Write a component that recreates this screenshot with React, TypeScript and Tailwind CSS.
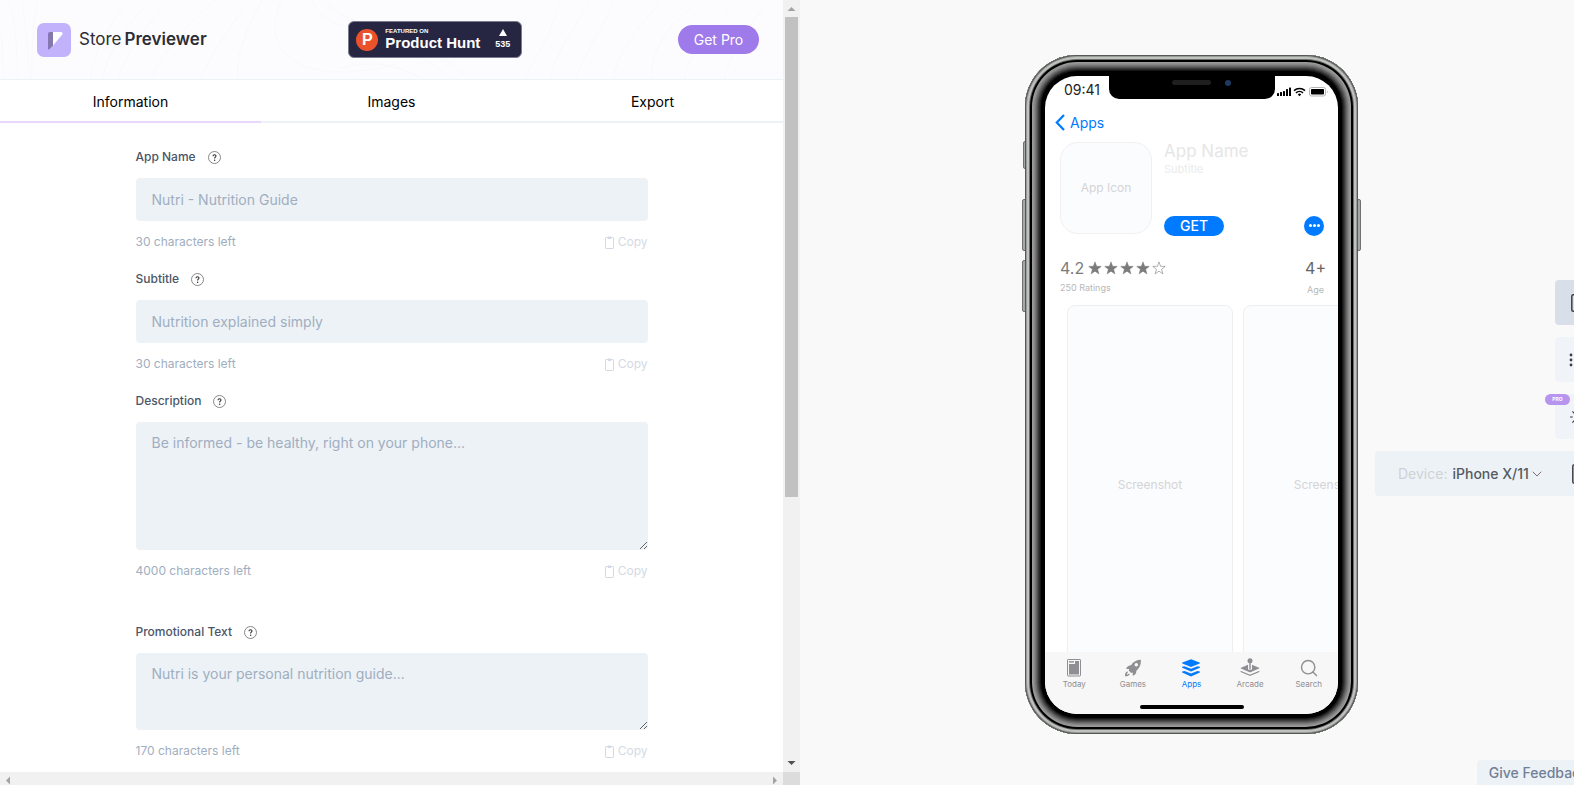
import { useState } from 'react'
import type { ReactNode } from 'react'
import { ChevronDown, Search } from 'lucide-react'

const tabs = ['Information', 'Images', 'Export']

/* Icons */

const LogoMark = () => (
  <svg width="34" height="34" viewBox="0 0 34 34" aria-hidden="true">
    <rect width="34" height="34" rx="7" fill="#c1b2fb" />
    <path d="M11 11a2 2 0 0 1 2-2h3v13.500l-4 4a.6.6 0 0 1-1-.4z" fill="#8577b0" />
    <path d="M16 9h8a1.600 1.600 0 0 1 1.300 2.600L16 22.500z" fill="#fff" />
  </svg>
)

const HelpIcon = () => (
  <svg width="13" height="13" viewBox="0 0 13 13" fill="none" aria-hidden="true">
    <circle cx="6.5" cy="6.5" r="6" stroke="#6b6b6b" strokeWidth="0.8" />
    <path d="M5 5.200c0-1 .6-1.500 1.500-1.500S8 4.300 8 5.100c0 1.100-1.400 1.100-1.400 2.300" stroke="#333" strokeWidth="1.1" />
    <circle cx="6.6" cy="9.200" r="0.75" fill="#333" />
  </svg>
)

const CopyIcon = () => (
  <svg width="9" height="13" viewBox="0 0 9 13" fill="none" stroke="currentColor" aria-hidden="true">
    <rect x="0.5" y="1.5" width="8" height="11" rx="0.6" />
    <path d="M3 1v1.500h3V1z" />
  </svg>
)

const Star = ({ filled }: { filled: boolean }) => (
  <svg width="14" height="14" viewBox="0 0 24 24" aria-hidden="true">
    <path
      d="M12 1.500l2.700 7.600 8 .2-6.300 4.900 2.200 7.800L12 17.400 5.400 22l2.200-7.800L1.300 9.300l8-.2z"
      fill={filled ? '#7b7b7b' : 'none'}
      stroke="#7b7b7b"
      strokeWidth="1"
    />
  </svg>
)

const StatusIcons = () => (
  <svg width="52" height="12" viewBox="0 0 52 12" aria-hidden="true">
    <rect x="0" y="7" width="2" height="3" rx="0.5" />
    <rect x="3" y="6" width="2" height="4" rx="0.5" />
    <rect x="6" y="5" width="2" height="5" rx="0.5" />
    <rect x="9" y="3" width="2" height="7" rx="0.5" />
    <rect x="12" y="1.5" width="2" height="8.5" rx="0.5" />
    <g fill="none" stroke="#000" strokeWidth="1.5">
      <path d="M17 4.600a8 8 0 0 1 11 0" />
      <path d="M19 6.900a5 5 0 0 1 7 0" />
    </g>
    <path d="M20.800 8.400a2.500 2.500 0 0 1 3.400 0l-1.700 1.800z" />
    <rect x="32.500" y="1.500" width="16" height="8.500" rx="2" fill="#fff" stroke="#b5b5b5" />
    <rect x="34" y="3" width="13" height="5.500" rx="0.8" />
    <path d="M50 4.500v2.500c.8-.3.8-2.200 0-2.500z" fill="#999" />
  </svg>
)

const TodayIcon = () => (
  <svg width="20" height="20" viewBox="0 0 20 20" aria-hidden="true">
    <rect x="3.500" y="1.500" width="13" height="16.500" rx="0.6" fill="none" stroke="currentColor" />
    <rect x="5" y="3.200" width="5" height="1.400" fill="currentColor" />
    <path d="M11 3h4v13.500H5V6h6z" fill="currentColor" />
  </svg>
)

const RocketIcon = () => (
  <svg width="20" height="20" viewBox="0 0 20 20" fill="currentColor" aria-hidden="true">
    <path
      fillRule="evenodd"
      d="M17.900 1.800c-4.300 0-7.600 1.900-9.900 5.400-2.200.1-3.800 1.200-4.700 3.200-.2.500.1.700.5.700l2.500-.1-.6 1.500 2.500 2.600 1.600-.7-.1 2.700c0 .5.300.7.800.4 1.900-1 2.900-2.500 2.900-4.800 3.300-2.500 4.800-6.200 4.500-10.900zM13.300 4.900a1.800 1.800 0 1 1 0 3.600 1.800 1.800 0 0 1 0-3.600z"
    />
    <path d="M4.300 13.200c-1.800.7-2.400 2.700-2.300 5 2.300.1 4.200-.5 4.800-2.300l-1-.4c-.4.700-1 1-2 1.100.1-1 .4-1.700 1.100-2.100z" />
  </svg>
)

const StackIcon = () => (
  <svg width="20" height="20" viewBox="0 0 20 20" fill="currentColor" aria-hidden="true">
    <path d="M10 1.200l8.600 3.400c.4.200.4.600 0 .8L10 8.900 1.400 5.400c-.4-.2-.4-.6 0-.8z" />
    <path d="M1.200 8.800l2.300-.6L10 10.800l6.500-2.600 2.300.6c.4.200.4.800 0 1L10 13.600 1.200 9.800c-.4-.2-.4-.8 0-1z" />
    <path d="M1.200 13.600l2.300-.6L10 15.600l6.500-2.600 2.300.6c.4.200.4.800 0 1L10 18.400l-8.800-3.800c-.4-.2-.4-.8 0-1z" />
  </svg>
)

const ArcadeIcon = () => (
  <svg width="20" height="20" viewBox="0 0 20 20" fill="currentColor" aria-hidden="true">
    <circle cx="10" cy="2.800" r="2.500" />
    <rect x="9.300" y="4" width="1.400" height="7.500" />
    <path d="M8 6.800v4.200c0 1.400 4 1.400 4 0V6.800l7 3c.5.200.5.600 0 .8l-8 3.300c-.7.300-1.300.3-2 0l-8-3.300c-.5-.2-.5-.6 0-.8z" />
    <path d="M.6 12.800l8.400 3.400c.7.300 1.300.3 2 0l8.400-3.400c.2.700 0 1.200-.6 1.500l-7.700 3.300c-.7.300-1.500.3-2.200 0l-7.700-3.300c-.6-.3-.8-.8-.6-1.500z" />
  </svg>
)

/* Lines drawn behind the header */
const Contours = () => (
  <svg
    className="absolute inset-0 h-full w-full"
    viewBox="0 0 783 79"
    preserveAspectRatio="none"
    fill="none"
    stroke="#f9f9fc"
    aria-hidden="true"
  >
    <path d="M0 30c4 18 2 32 4 49M8 0c10 30 8 50 10 79M22 0c4 30 6 50 8 79M38 0c-6 26-6 50-6 79" />
    <path d="M130 0c-20 22-34 46-40 79M150 0c-22 24-40 48-48 79M172 0c-24 22-44 50-54 79M215 0c-30 26-50 50-64 79" />
    <path d="M250 0c-20 26-36 50-50 79M262 0c-16 30-26 54-24 79M282 0c-14 26-6 50 14 62s60 14 100 2" />
    <path d="M312 0c6 24 40 26 70 40s50 22 70 39M326 0c8 18 40 22 76 38s50 24 66 41M340 68c40-10 60 0 84 11" />
    <path d="M560 0c-6 26-20 52-36 79M590 0c-14 28-34 50-40 79M614 0c-10 30-30 50-38 79M660 0c-16 24-44 50-46 79" />
    <path d="M700 0c-30 24-52 50-48 79M740 0c-26 26-50 50-56 79M770 0c-22 26-40 54-46 79" />
  </svg>
)

/* Form */

interface FieldProps {
  id: string
  label: string
  placeholder: string
  limit: number
  rows?: 'tall' | 'short'
}

const Field = ({ id, label, placeholder, limit, rows }: FieldProps) => {
  const [value, setValue] = useState('')
  const box =
    'block w-full rounded bg-[#edf2f7] px-4 text-sm text-gray-700 placeholder:text-[#a0aec0] outline-none'

  return (
    <div>
      <div className="mb-[10px] flex h-[22px] items-center gap-3">
        <label htmlFor={id} className="text-xs font-medium text-[#4a5568]">
          {label}
        </label>
        <button type="button" aria-label={`About ${label}`}>
          <HelpIcon />
        </button>
      </div>
      {rows ? (
        <textarea
          id={id}
          placeholder={placeholder}
          value={value}
          onChange={(e) => setValue(e.target.value)}
          className={`${box} py-[11px] leading-5 ${rows === 'tall' ? 'h-32' : 'h-[77px]'}`}
        />
      ) : (
        <input
          id={id}
          type="text"
          placeholder={placeholder}
          value={value}
          onChange={(e) => setValue(e.target.value)}
          className={`${box} h-[43px]`}
        />
      )}
      <div className="mt-[9px] flex h-6 items-center justify-between text-xs">
        <span className="text-[#a0aec0]">{limit - value.length} characters left</span>
        <button type="button" className="flex items-center gap-1 text-[#d3dae4]">
          <CopyIcon />
          Copy
        </button>
      </div>
    </div>
  )
}

const Header = () => (
  <header className="relative h-20 shrink-0 border-b border-[#edf2f7] bg-[#fcfcff]">
    <Contours />
    <div className="relative flex h-[79px] items-center justify-between pr-6 pl-[37px]">
      <a href="#" className="flex items-center gap-2 text-[#2d2d33]">
        <LogoMark />
        <span className="text-[17px]">
          Store<span className="ml-[3px] font-semibold">Previewer</span>
        </span>
      </a>
      <a
        href="#"
        className="mr-[14px] flex h-[37px] w-[174px] items-center rounded-md border border-[#7a7b8c] bg-[#272642] pr-[11px] pl-[7px] font-['Liberation_Sans',Arial,sans-serif] font-bold text-white"
      >
        <span className="flex size-[22px] items-center justify-center rounded-full bg-[#ea532a] text-base">P</span>
        <span className="ml-[7px] flex-1">
          <span className="block text-[6px] leading-[7px]">FEATURED ON</span>
          <span className="block text-[15px] leading-4">Product Hunt</span>
        </span>
        <span className="flex flex-col items-center text-[9px] leading-3">
          <svg width="8" height="7" viewBox="0 0 8 7" fill="#fff" aria-hidden="true">
            <path d="M4 0l4 7H0z" />
          </svg>
          <span className="mt-0.5">535</span>
        </span>
      </a>
      <button type="button" className="h-[29px] w-[81px] rounded-full bg-[#9f7aea] text-sm text-white">
        Get Pro
      </button>
    </div>
  </header>
)

const VerticalScrollbar = () => (
  <div className="flex w-[17px] shrink-0 flex-col items-center bg-[#f1f1f1]" aria-hidden="true">
    <svg width="17" height="17" viewBox="0 0 17 17" fill="#a3a3a3">
      <path d="M8.500 7l4 4h-8z" />
    </svg>
    <div className="h-[480px] w-[13px] bg-[#c1c1c1]" />
    <svg className="mt-auto" width="17" height="17" viewBox="0 0 17 17" fill="#505050">
      <path d="M4.500 6h8l-4 4z" />
    </svg>
  </div>
)

const HorizontalScrollbar = () => (
  <div className="flex h-[13px] shrink-0 bg-[#f1f1f1]" aria-hidden="true">
    <svg width="17" height="13" viewBox="0 0 17 13" fill="#a3a3a3">
      <path d="M10 4.500v8l-4-4z" />
    </svg>
    <svg className="ml-auto" width="17" height="13" viewBox="0 0 17 13" fill="#a3a3a3">
      <path d="M7 4.500v8l4-4z" />
    </svg>
    <div className="w-[17px] bg-[#dcdcdc]" />
  </div>
)

const Editor = () => {
  const [active, setActive] = useState('Information')

  return (
    <section className="flex min-w-0 flex-col bg-white">
      <div className="flex min-h-0 flex-1">
        <div className="flex min-w-0 flex-1 flex-col overflow-hidden">
          <Header />
          <nav className="grid shrink-0 grid-cols-3">
            {tabs.map((tab) => (
              <button
                key={tab}
                type="button"
                onClick={() => setActive(tab)}
                className={`h-[43px] border-b-2 pt-[3px] text-sm text-black ${
                  tab === active ? 'border-[#e9d8fd]' : 'border-[#edf2f7]'
                }`}
              >
                {tab}
              </button>
            ))}
          </nav>
          <form className="mx-auto flex w-full max-w-lg flex-col gap-[14px] pt-[23px]">
            <Field id="app-name" label="App Name" placeholder="Nutri - Nutrition Guide" limit={30} />
            <Field id="subtitle" label="Subtitle" placeholder="Nutrition explained simply" limit={30} />
            <Field
              id="description"
              label="Description"
              placeholder="Be informed - be healthy, right on your phone..."
              limit={4000}
              rows="tall"
            />
            <div className="pt-6">
              <Field
                id="promo"
                label="Promotional Text"
                placeholder="Nutri is your personal nutrition guide..."
                limit={170}
                rows="short"
              />
            </div>
          </form>
        </div>
        <VerticalScrollbar />
      </div>
      <HorizontalScrollbar />
    </section>
  )
}

/* Phone */

interface PhoneTabProps {
  label: string
  active?: boolean
  children: ReactNode
}

const PhoneTab = ({ label, active, children }: PhoneTabProps) => (
  <button
    type="button"
    className={`flex flex-col items-center text-[8px] leading-3 ${active ? 'text-[#007aff]' : 'text-[#8e8e93]'}`}
  >
    {children}
    {label}
  </button>
)

const Screenshot = () => (
  <div className="flex h-[360px] w-[166px] shrink-0 items-center justify-center rounded-lg border border-[#efefef] bg-[#fbfcfe] text-xs text-[#d4d4d6]">
    Screenshot
  </div>
)

const Phone = () => (
  <div className="relative shrink-0">
    {/* Hardware buttons */}
    <div className="absolute top-[86px] -left-0.5 h-7 w-1 rounded-l-xs border border-[#6f7271] bg-[#a5a8a8]" />
    <div className="absolute top-36 -left-[3px] h-[52px] w-1 rounded-l-xs border border-[#6f7271] bg-[#a5a8a8]" />
    <div className="absolute top-[205px] -left-[3px] h-[52px] w-1 rounded-l-xs border border-[#6f7271] bg-[#a5a8a8]" />
    <div className="absolute top-36 -right-[3px] h-[52px] w-1 rounded-r-xs border border-[#6f7271] bg-[#a5a8a8]" />

    <div className="relative h-[679px] w-[333px] rounded-[52px] bg-black px-5 pt-[21px] pb-5 shadow-[inset_0_0_0_1px_#565856,inset_0_0_0_2px_#9a9c9a,inset_0_0_0_4px_#c0c2c0,inset_0_0_0_5px_#6c6e6c,inset_0_0_0_7px_#000,inset_0_0_0_8px_#9a9a9a,inset_0_0_0_9px_#929292,inset_0_0_0_10px_#868686,inset_0_0_0_11px_#767676,inset_0_0_0_12px_#646464,inset_0_0_0_13px_#505050,inset_0_0_0_14px_#3c3c3c,inset_0_0_0_15px_#282828,inset_0_0_0_16px_#161616]">
      <div className="relative flex h-full flex-col overflow-hidden rounded-[32px] bg-white">
        {/* Notch */}
        <div className="absolute top-0 left-16 flex h-[23px] w-[166px] justify-center gap-[14px] rounded-b-[10px] bg-black">
          <div className="mt-1 ml-[18px] h-[5px] w-[39px] rounded-full bg-[#1f1f1f]" />
          <div className="mt-1 size-[6px] rounded-full bg-[#1d3a63]" />
        </div>

        <div className="flex h-7 shrink-0 items-center justify-between pr-[9px] pl-[19px] text-sm text-[#222]">
          09:41
          <div className="pt-1">
            <StatusIcons />
          </div>
        </div>

        <a href="#" className="mt-[7px] flex h-6 shrink-0 items-center gap-[5px] pl-[10px] text-sm text-[#007aff]">
          <svg width="10" height="17" viewBox="0 0 10 17" fill="none" stroke="currentColor" strokeWidth="2.2" aria-hidden="true">
            <path d="M9 1L1.800 8.500 9 16" />
          </svg>
          Apps
        </a>

        <div className="mt-[7px] flex shrink-0 gap-3 pr-[14px] pl-[15px]">
          <div className="flex size-[92px] items-center justify-center rounded-[18px] border border-[#f0f0f2] bg-[#fbfcfe] text-xs text-[#d4d4d6]">
            App Icon
          </div>
          <div className="-mb-0.5 flex flex-1 flex-col">
            <div className="text-[17px] leading-[18px] text-[#e6e6e6]">App Name</div>
            <div className="text-[11px] leading-[18px] text-[#ebebeb]">Subtitle</div>
            <div className="mt-auto flex items-center justify-between">
              <button type="button" className="h-5 w-[60px] rounded-full bg-[#007aff] text-sm leading-5 font-medium text-white">
                GET
              </button>
              <button
                type="button"
                aria-label="More"
                className="flex size-5 items-center justify-center gap-px rounded-full bg-[#007aff]"
              >
                <span className="size-[3px] rounded-full bg-white" />
                <span className="size-[3px] rounded-full bg-white" />
                <span className="size-[3px] rounded-full bg-white" />
              </button>
            </div>
          </div>
        </div>

        <div className="mt-[22px] flex shrink-0 justify-between pr-3 pl-[15px] text-[#7b7b7b]">
          <div>
            <div className="flex h-6 items-center gap-0.5">
              <span className="mr-0.5 text-base">4.2</span>
              {[1, 2, 3, 4, 5].map((n) => (
                <Star key={n} filled={n < 5} />
              ))}
            </div>
            <div className="text-[9px] leading-4 text-[#b8b8b8]">250 Ratings</div>
          </div>
          <div className="text-center">
            <div className="h-6 text-base text-[#666]">4+</div>
            <div className="text-[9px] leading-5 text-[#b8b8b8]">Age</div>
          </div>
        </div>

        <div className="mt-[5px] flex min-h-0 flex-1 gap-[10px] overflow-hidden pl-[22px]">
          <Screenshot />
          <Screenshot />
        </div>

        <div className="flex h-[62px] shrink-0 flex-col items-center bg-[#f7f7f7] pt-[6px]">
          <div className="grid w-full grid-cols-5">
            <PhoneTab label="Today">
              <TodayIcon />
            </PhoneTab>
            <PhoneTab label="Games">
              <RocketIcon />
            </PhoneTab>
            <PhoneTab label="Apps" active>
              <StackIcon />
            </PhoneTab>
            <PhoneTab label="Arcade">
              <ArcadeIcon />
            </PhoneTab>
            <PhoneTab label="Search">
              <Search className="size-5" strokeWidth={1.7} />
            </PhoneTab>
          </div>
          <div className="mt-[15px] h-1 w-[104px] rounded-full bg-black" />
        </div>
      </div>
    </div>
  </div>
)

const Toolbar = () => (
  <div className="-mr-[26px] flex flex-col items-end gap-3 text-[#3f3f46]">
    <button type="button" aria-label="Single view" className="flex size-[45px] items-center justify-center rounded bg-[#d8dfe8]">
      <svg width="13" height="18" viewBox="0 0 13 18" fill="none" stroke="currentColor" strokeWidth="1.5" aria-hidden="true">
        <rect x="0.8" y="0.8" width="11.400" height="16.400" rx="1.500" />
      </svg>
    </button>
    <button type="button" aria-label="List view" className="flex size-[45px] items-center justify-center rounded bg-[#f0f4f9]">
      <svg width="17" height="14" viewBox="0 0 17 14" fill="currentColor" aria-hidden="true">
        <circle cx="2" cy="2" r="1.400" />
        <circle cx="2" cy="7" r="1.400" />
        <circle cx="2" cy="12" r="1.400" />
        <path d="M5 1h11v2H5zM5 6h11v2H5zM5 11h11v2H5z" />
      </svg>
    </button>
    <button type="button" aria-label="Appearance" className="relative flex size-[45px] items-center justify-center rounded bg-[#f0f4f9]">
      <svg width="16" height="16" viewBox="0 0 17 17" fill="none" stroke="currentColor" strokeWidth="1.2" aria-hidden="true">
        <circle cx="8.500" cy="8.500" r="3" />
        <path d="M0 8.500h3M14 8.500h3M8.500 0v3M8.500 14v3M2.500 2.500l2 2M12.500 12.500l2 2M2.500 14.500l2-2M12.500 4.500l2-2" />
      </svg>
      <span className="absolute top-0 -left-[10px] flex h-[11px] w-[25px] items-center justify-center rounded-full bg-[#b794ee] text-[5px] font-bold text-white">
        PRO
      </span>
    </button>
    <div className="flex h-[45px] w-[225px] items-center rounded bg-[#edf2f7] pl-[23px] text-sm">
      <label htmlFor="device" className="text-[#cdd2d7]">
        Device:
      </label>
      <div className="ml-[5px] flex items-center">
        <select id="device" defaultValue="x" className="w-[77px] appearance-none font-medium text-[#555a60] outline-none">
          <option value="x">iPhone X/11</option>
          <option value="8">iPhone 8</option>
        </select>
        <ChevronDown className="pointer-events-none size-4 text-[#7d6f6f]" strokeWidth={1.5} />
      </div>
      <svg className="mr-3 ml-auto" width="16" height="20" viewBox="0 0 16 20" fill="none" stroke="currentColor" strokeWidth="1.5" aria-hidden="true">
        <rect x="0.8" y="0.8" width="11.400" height="18.400" rx="1.500" />
      </svg>
    </div>
  </div>
)

export default function App() {
  return (
    <div className="grid h-screen grid-cols-[minmax(0,800fr)_minmax(0,774fr)] overflow-hidden font-['Inter',sans-serif]">
      <Editor />
      <main className="relative flex items-center overflow-hidden bg-[#f9f9f9] pt-[3px] pl-[9px]">
        <div className="flex-1" />
        <Phone />
        <div className="flex min-w-0 flex-1 basis-0 justify-end pb-3">
          <Toolbar />
        </div>
        <button
          type="button"
          className="absolute -right-[26px] bottom-0 h-[25px] rounded-t bg-[#edf2f7] px-3 pt-px text-sm font-medium text-[#718096]"
        >
          Give Feedback
        </button>
      </main>
    </div>
  )
}
